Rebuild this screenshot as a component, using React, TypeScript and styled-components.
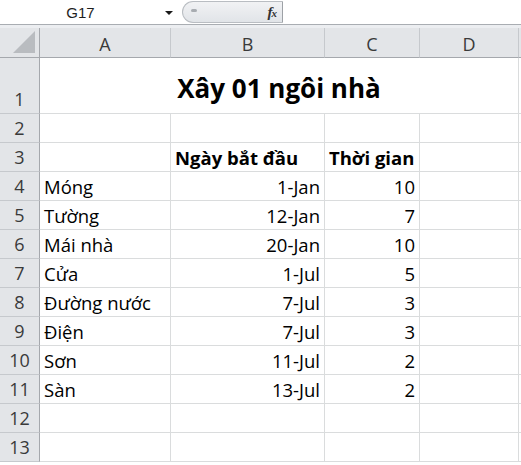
import React from 'react';
import styled, { createGlobalStyle } from 'styled-components';

const GlobalStyle = createGlobalStyle`
  html, body {
    margin: 0;
    padding: 0;
    background: #ffffff;
  }
  body {
    font-family: "Open Sans", "Noto Sans", sans-serif;
    overflow: hidden;
  }
`;

const Window = styled.div`
  width: 521px;
  height: 465px;
  background: #ffffff;
  overflow: hidden;
`;

const FormulaBar = styled.div`
  display: flex;
  height: 24px;
  background: #ffffff;
  border-bottom: 1px solid #a9adb2;
`;

const NameBox = styled.div`
  width: 180px;
  display: flex;
  align-items: center;
  font-family: "Liberation Sans", Arial, sans-serif;
  font-size: 15px;
  color: #1e1e1e;
`;

const NameText = styled.span`
  flex: 1;
  text-align: center;
  padding-left: 4px;
  padding-right: 8px;
`;

const DropArrow = styled.span`
  width: 0;
  height: 0;
  margin-right: 7px;
  margin-top: 1px;
  border-left: 4px solid transparent;
  border-right: 4px solid transparent;
  border-top: 4px solid #1a1a1a;
`;

const Pill = styled.div`
  width: 101px;
  margin: 1px 0 0 2px;
  height: 22px;
  border: 1px solid #b9bdc2;
  border-right: 1px solid #9da1a6;
  border-radius: 12px 0 0 12px;
  background: linear-gradient(#f1f2f4, #e1e4e8);
  display: flex;
  align-items: center;
  justify-content: space-between;
  padding: 0 6px 0 8px;
  box-sizing: border-box;
`;

const Grip = styled.span`
  width: 6px;
  height: 3px;
  border-radius: 2px;
  background: #a8acb1;
  margin-top: -3px;
`;

const Fx = styled.span`
  font-family: "Liberation Serif", "DejaVu Serif", serif;
  font-style: italic;
  font-weight: bold;
  font-size: 15px;
  color: #333;
  letter-spacing: -1px;

  small {
    font-size: 11px;
  }
`;

const FormulaInput = styled.div`
  flex: 1;
  background: #ffffff;
`;

const Spacer = styled.div`
  height: 3px;
  background: #eceef1;
`;

const Sheet = styled.div`
  display: grid;
  grid-template-columns: 40px 131px 154px 95px 99px 1fr;
  grid-template-rows: 30px 56px repeat(12, 29px);
  font-family: "Open Sans", "Noto Sans", sans-serif;
  font-size: 18.5px;
  color: #000;
`;

const Corner = styled.div`
  background: #e3e5e8;
  border-right: 1px solid #a5a8ad;
  border-bottom: 1px solid #a5a8ad;
  position: relative;
  overflow: hidden;
`;

const CornerTriangle = styled.div`
  position: absolute;
  right: 4px;
  bottom: 4px;
  width: 0;
  height: 0;
  border-left: 22px solid transparent;
  border-bottom: 22px solid #b9bcc0;
`;

const ColHead = styled.div`
  background: #e3e5e8;
  border-right: 1px solid #c6c9cd;
  border-bottom: 1px solid #a5a8ad;
  display: flex;
  align-items: center;
  justify-content: center;
  color: #3a3a3a;
  font-size: 18px;
  padding-top: 2px;
`;

const RowHead = styled.div`
  background: #e3e5e8;
  border-right: 1px solid #a5a8ad;
  border-bottom: 1px solid #c6c9cd;
  display: flex;
  align-items: flex-end;
  justify-content: center;
  color: #3a3a3a;
  font-size: 18px;
  line-height: 1;
  padding-bottom: 5px;
  box-sizing: border-box;
`;

const Cell = styled.div<{ $align?: 'left' | 'right' | 'center'; $bold?: boolean; $span?: number }>`
  border-right: 1px solid #dadcdd;
  border-bottom: 1px solid #dadcdd;
  display: flex;
  align-items: flex-end;
  justify-content: ${({ $align }) =>
    $align === 'right' ? 'flex-end' : $align === 'center' ? 'center' : 'flex-start'};
  padding: 0 4px 4px 4px;
  box-sizing: border-box;
  white-space: nowrap;
  line-height: 1;
  font-weight: ${({ $bold }) => ($bold ? 700 : 400)};
  grid-column: ${({ $span }) => ($span ? `span ${$span}` : 'auto')};
`;

const Title = styled(Cell)`
  font-size: 26px;
  padding-bottom: 12px;
`;

type Row = [string, string, string];

const rows: Row[] = [
  ['Móng', '1-Jan', '10'],
  ['Tường', '12-Jan', '7'],
  ['Mái nhà', '20-Jan', '10'],
  ['Cửa', '1-Jul', '5'],
  ['Đường nước', '7-Jul', '3'],
  ['Điện', '7-Jul', '3'],
  ['Sơn', '11-Jul', '2'],
  ['Sàn', '13-Jul', '2'],
];

const cols = ['A', 'B', 'C', 'D', ''];

export default function App() {
  return (
    <Window>
      <GlobalStyle />
      <FormulaBar>
        <NameBox>
          <NameText>G17</NameText>
          <DropArrow />
        </NameBox>
        <Pill>
          <Grip />
          <Fx>
            f<small>x</small>
          </Fx>
        </Pill>
        <FormulaInput />
      </FormulaBar>
      <Spacer />
      <Sheet>
        <Corner>
          <CornerTriangle />
        </Corner>
        {cols.map((c, i) => (
          <ColHead key={i}>{c}</ColHead>
        ))}

        <RowHead>1</RowHead>
        <Title $bold $align="center" $span={4}>
          Xây 01 ngôi nhà
        </Title>
        <Cell />

        <RowHead>2</RowHead>
        <Cell />
        <Cell />
        <Cell />
        <Cell />
        <Cell />

        <RowHead>3</RowHead>
        <Cell />
        <Cell $bold>Ngày bắt đầu</Cell>
        <Cell $bold>Thời gian</Cell>
        <Cell />
        <Cell />

        {rows.map((r, i) => (
          <React.Fragment key={r[0]}>
            <RowHead>{i + 4}</RowHead>
            <Cell>{r[0]}</Cell>
            <Cell $align="right">{r[1]}</Cell>
            <Cell $align="right">{r[2]}</Cell>
            <Cell />
            <Cell />
          </React.Fragment>
        ))}

        {[12, 13].map((n) => (
          <React.Fragment key={n}>
            <RowHead>{n}</RowHead>
            <Cell />
            <Cell />
            <Cell />
            <Cell />
            <Cell />
          </React.Fragment>
        ))}
      </Sheet>
    </Window>
  );
}
